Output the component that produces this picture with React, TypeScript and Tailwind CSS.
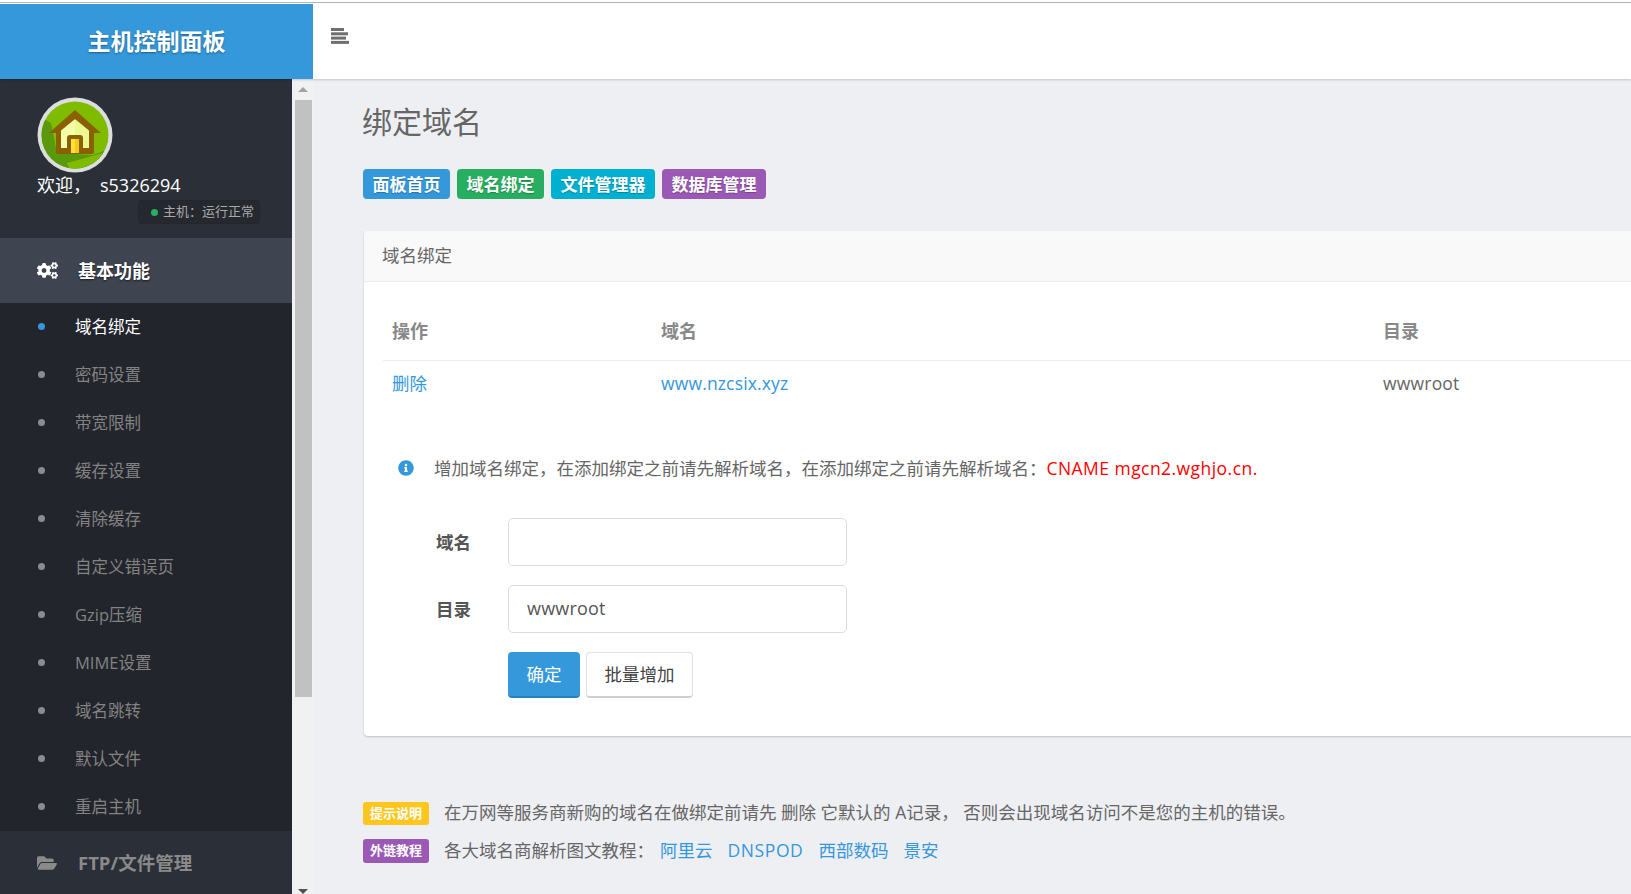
import { FaCogs, FaFolderOpen, FaInfoCircle } from "react-icons/fa";

const SUB_ITEMS = [
  "域名绑定",
  "密码设置",
  "带宽限制",
  "缓存设置",
  "清除缓存",
  "自定义错误页",
  "Gzip压缩",
  "MIME设置",
  "域名跳转",
  "默认文件",
  "重启主机",
];

function Avatar() {
  return (
    <svg width="76" height="76" viewBox="0 0 76 76" className="block">
      <defs>
        <clipPath id="avatar-disc">
          <circle cx="38" cy="38" r="33.5" />
        </clipPath>
      </defs>
      <circle cx="38" cy="38" r="37.5" fill="#dddddd" />
      <circle cx="38" cy="38" r="33.5" fill="#7fbc00" />
      <g clipPath="url(#avatar-disc)">
        <path d="M0 18 L14 26 L20 56 L56 58 L72 52 L76 76 L0 76 Z" fill="#5a980c" />
        <path d="M30 66 L66 56 L58 66 L34 76 Z" fill="#7fbc00" />
      </g>
      <path d="M21 33 L38 22 L38 54 H21 Z" fill="#f3ffa8" />
      <path d="M38 22 L55 33 V54 H38 Z" fill="#ebf990" />
      <path d="M12 36 L38 13 L64 36 H55 L38 22 L21 36 Z" fill="#8a6000" />
      <path d="M19 33 H24 V51 H52 V33 H57 V55 A2 2 0 0 1 55 57 H21 A2 2 0 0 1 19 55 Z" fill="#8a6000" />
      <path d="M30 56 V41 A3 3 0 0 1 33 38 H43 A3 3 0 0 1 46 41 V56 Z" fill="#8a6000" />
      <rect x="34" y="42" width="8" height="14" fill="#ffe13c" />
      <rect x="38" y="42" width="4" height="14" fill="#f5c915" />
    </svg>
  );
}

function ToggleIcon() {
  return (
    <svg width="18" height="16" viewBox="0 0 18 16" className="block">
      <rect x="0" y="0" width="13" height="3" fill="#6f6f6f" />
      <rect x="0" y="4.3" width="17" height="3" fill="#6f6f6f" />
      <rect x="0" y="8.6" width="15" height="3" fill="#6f6f6f" />
      <rect x="0" y="12.9" width="18" height="3" fill="#6f6f6f" />
    </svg>
  );
}

function Sidebar() {
  return (
    <aside className="w-[292px] shrink-0 flex flex-col bg-[#2b2f38] overflow-hidden">
      <div className="h-[159px] shrink-0 pl-[37px] pt-[18px] relative">
        <Avatar />
        <div className="text-[18px] leading-[24px] text-white flex">
          <span className="w-[63px]">欢迎，</span>
          <span>s5326294</span>
        </div>
        <div className="absolute left-[138px] top-[121px] w-[122px] h-[24px] flex items-center pl-[12px] gap-[5px] rounded-[4px] bg-[#25282f] border border-[#23262c] text-[13px] text-[#a8a8a8] whitespace-nowrap">
          <span className="w-[7px] h-[7px] rounded-full bg-[#27ae60]" />
          <span>主机：运行正常</span>
        </div>
      </div>

      <div className="h-[65px] shrink-0 bg-[#3e4450] flex items-center pl-[37px] text-white font-bold text-[18px] [text-shadow:0_1px_2px_rgba(0,0,0,0.6)]">
        <FaCogs className="w-[21px] h-[21px] mr-[20px]" />
        <span className="pt-[1px]">基本功能</span>
      </div>

      <ul className="bg-[#22252b] shrink-0">
        {SUB_ITEMS.map((item, i) => (
          <li key={item} className="h-[48px] flex items-center pl-[38px]">
            <span className={`w-[7px] h-[7px] rounded-full mr-[30px] -mt-[1px] ${i === 0 ? "bg-[#3498db]" : "bg-[#8c8c8c]"}`} />
            <span className={`text-[16.5px] pt-[1px] ${i === 0 ? "text-white" : "text-[#838383]"}`}>{item}</span>
          </li>
        ))}
      </ul>

      <div className="h-[63px] shrink-0 flex items-center pl-[37px] text-[#8a8a8a] font-bold text-[18.5px]">
        <FaFolderOpen className="w-[20px] h-[20px] mr-[21px]" />
        <span className="pt-[1px]">FTP/文件管理</span>
      </div>
    </aside>
  );
}

function FakeScrollbar() {
  return (
    <div className="w-[22px] shrink-0 bg-[#f1f1f1] flex flex-col items-center pl-[3px] pr-[3px]">
      <div className="h-[21px] w-full flex items-center justify-center">
        <span className="w-0 h-0 border-x-[5px] border-x-transparent border-b-[5px] border-b-[#a3a3a3]" />
      </div>
      <div className="w-[17px] h-[597px] bg-[#c1c1c1]" />
      <div className="mt-auto h-[5px] w-full flex justify-center">
        <span className="w-0 h-0 border-x-[5px] border-x-transparent border-t-[5px] border-t-[#505050]" />
      </div>
    </div>
  );
}

function Tag({ color, children }: { color: string; children: React.ReactNode }) {
  return (
    <span className={`h-[30px] px-[9.5px] flex items-center rounded-[4px] text-white font-bold text-[17px] pt-[1px] [text-shadow:0_1px_1px_rgba(0,0,0,0.25)] ${color}`}>
      {children}
    </span>
  );
}

function FormRow({ label, value }: { label: string; value: string }) {
  return (
    <div className="flex items-center">
      <label className="w-[72px] ml-[53px] font-bold text-[#555] text-[17.5px]">{label}</label>
      <input
        readOnly
        value={value}
        className="w-[339px] h-[48px] border border-[#dcdcdc] rounded-[5px] px-[18px] pb-[2px] text-[#555] text-[18px] tracking-[0.2px] outline-none"
      />
    </div>
  );
}

function Content() {
  return (
    <main className="flex-1 min-w-0 overflow-hidden bg-[#eeeff3] pl-[49px] pt-[21px] text-[#666]">
      <h1 className="text-[30px] leading-[44px] font-normal text-[#666] -ml-[1px]">绑定域名</h1>

      <div className="flex gap-[7px] mt-[25px]">
        <Tag color="bg-[#3498db]">面板首页</Tag>
        <Tag color="bg-[#27ae60]">域名绑定</Tag>
        <Tag color="bg-[#00b0d0]">文件管理器</Tag>
        <Tag color="bg-[#9b59b6]">数据库管理</Tag>
      </div>

      <section className="w-[1400px] ml-[1px] mt-[32px] h-[505px] bg-white rounded-[4px] shadow-[0_1px_2px_rgba(0,0,0,0.2)]">
        <div className="h-[51px] bg-[#f9f9f9] border-b border-[#ececec] rounded-t-[4px] flex items-center pl-[18px] pb-[2px] text-[17.5px] text-[#666]">
          域名绑定
        </div>

        <div className="pl-[19px] pt-[23px]">
          <table className="w-full table-fixed text-[17.5px]">
            <colgroup>
              <col className="w-[278px]" />
              <col className="w-[722px]" />
              <col />
            </colgroup>
            <thead>
              <tr className="h-[55px] border-b border-[#ececec] text-[#888] font-bold text-left text-[18px]">
                <th className="pl-[9px] pb-[2px]">操作</th>
                <th className="pb-[2px]">域名</th>
                <th className="pb-[2px]">目录</th>
              </tr>
            </thead>
            <tbody>
              <tr className="h-[48px]">
                <td className="pl-[9px] pb-[3px] text-[#3498db]">删除</td>
                <td className="pb-[3px] text-[#3498db] tracking-[0.15px]">www.nzcsix.xyz</td>
                <td className="pb-[3px] text-[#666] tracking-[0.2px]">wwwroot</td>
              </tr>
            </tbody>
          </table>

          <div className="flex items-center mt-[44px] pl-[15px] text-[17.5px] h-[32px]">
            <FaInfoCircle className="w-[16px] h-[16px] text-[#3498db] mr-[20px]" />
            <span>增加域名绑定，在添加绑定之前请先解析域名，在添加绑定之前请先解析域名：</span>
            <span className="text-[#f00] tracking-[0.45px]">CNAME mgcn2.wghjo.cn.</span>
          </div>

          <form className="mt-[34px] flex flex-col gap-[19px]">
            <FormRow label="域名" value="" />
            <FormRow label="目录" value="wwwroot" />
            <div className="flex gap-[6px] pl-[125px]">
              <button type="button" className="w-[72px] h-[46px] rounded-[4px] bg-[#3498db] border-b-2 border-[#2a80b9] text-white text-[17.5px]">
                确定
              </button>
              <button type="button" className="w-[107px] h-[46px] rounded-[4px] bg-white border border-[#e0e0e0] border-b-2 border-b-[#cfcfcf] text-[#444] text-[17.5px]">
                批量增加
              </button>
            </div>
          </form>
        </div>
      </section>

      <div className="mt-[66px] flex flex-col gap-[14px] text-[17.5px]">
        <div className="flex items-center h-[23px]">
          <span className="w-[66px] h-[23px] flex items-center justify-center rounded-[3px] bg-[#ffc61e] text-white font-bold text-[13px]">提示说明</span>
          <span className="ml-[15px] -mt-[2px]">在万网等服务商新购的域名在做绑定前请先 删除 它默认的 A记录， 否则会出现域名访问不是您的主机的错误。</span>
        </div>
        <div className="flex items-center h-[24px]">
          <span className="w-[66px] h-[24px] flex items-center justify-center rounded-[3px] bg-[#9b59b6] text-white font-bold text-[13px]">外链教程</span>
          <span className="ml-[15px] -mt-[1px]">各大域名商解析图文教程：</span>
          <span className="text-[#3498db] ml-[6px] -mt-[1px] flex gap-[15px]">
            <a>阿里云</a>
            <a className="tracking-[0.6px]">DNSPOD</a>
            <a>西部数码</a>
            <a>景安</a>
          </span>
        </div>
      </div>
    </main>
  );
}

export default function App() {
  return (
    <div className="h-screen flex flex-col overflow-hidden bg-white font-['Open_Sans','Noto_Sans_CJK_SC',sans-serif]">
      <div className="h-[4px] shrink-0 pt-[2px]">
        <div className="h-px bg-[#b5b5b5]" />
      </div>
      <header className="h-[75px] shrink-0 flex relative z-10 bg-white shadow-[0_1px_2px_rgba(0,0,0,0.18)]">
        <div className="w-[313px] shrink-0 bg-[#3498db] flex items-center justify-center text-white font-bold text-[23px] [text-shadow:0_1px_2px_rgba(0,0,0,0.4)]">
          主机控制面板
        </div>
        <div className="pl-[18px] pt-[24px]">
          <ToggleIcon />
        </div>
      </header>
      <div className="flex-1 min-h-0 flex">
        <Sidebar />
        <FakeScrollbar />
        <Content />
      </div>
    </div>
  );
}
